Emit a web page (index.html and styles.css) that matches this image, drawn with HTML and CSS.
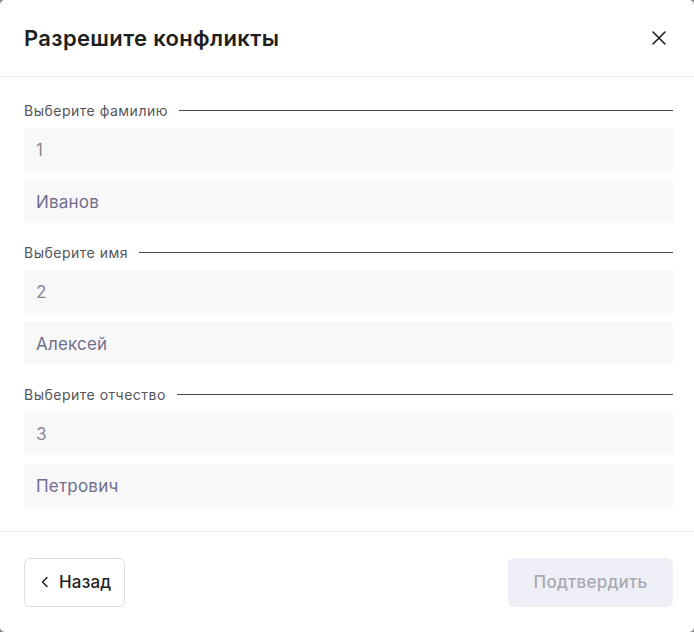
FILE: index.html
```html
<!DOCTYPE html>
<html lang="ru">
<head>
<meta charset="utf-8">
<link rel="stylesheet" href="styles.css">
</head>
<body>
<div class="modal">
  <div class="header">
    <h1 class="title">Разрешите конфликты</h1>
    <button class="close" aria-label="Закрыть">
      <svg width="16" height="16" viewBox="0 0 16 16"><path d="M2 2L14 14M14 2L2 14" stroke="#1f1f1f" stroke-width="1.6" stroke-linecap="round" fill="none"/></svg>
    </button>
  </div>
  <div class="body">
    <div class="group">
      <div class="label"><span>Выберите фамилию</span><i class="rule"></i></div>
      <div class="option num">1</div>
      <div class="option">Иванов</div>
    </div>
    <div class="group">
      <div class="label"><span>Выберите имя</span><i class="rule"></i></div>
      <div class="option num">2</div>
      <div class="option">Алексей</div>
    </div>
    <div class="group">
      <div class="label"><span>Выберите отчество</span><i class="rule"></i></div>
      <div class="option num">3</div>
      <div class="option">Петрович</div>
    </div>
  </div>
  <div class="footer">
    <button class="btn back">
      <svg width="10" height="12" viewBox="0 0 10 12"><path d="M7 1.5L2.5 6L7 10.5" stroke="#1f1f1f" stroke-width="1.5" fill="none" stroke-linecap="round" stroke-linejoin="round"/></svg>
      <span>Назад</span>
    </button>
    <button class="btn confirm" disabled>Подтвердить</button>
  </div>
</div>
</body>
</html>
```

FILE: styles.css
```css
html, body {
  margin: 0;
  padding: 0;
  background: #8a8a8a;
}
body {
  font-family: Inter, "Noto Sans", sans-serif;
}
.modal {
  width: 694px;
  height: 632px;
  background: #ffffff;
  border-radius: 5px;
  display: flex;
  flex-direction: column;
  box-sizing: border-box;
  overflow: hidden;
}
.header {
  height: 77px;
  box-sizing: border-box;
  border-bottom: 1px solid #f0f0f2;
  display: flex;
  align-items: center;
  justify-content: space-between;
  padding: 0 24px 1px 24px;
  flex: none;
}
.title {
  margin: 0;
  font-size: 22px;
  font-weight: 600;
  color: #1f1f1f;
  letter-spacing: 0.35px;
}
.close {
  border: none;
  background: none;
  padding: 0;
  width: 16px;
  height: 16px;
  display: flex;
  margin-right: 3px;
  cursor: pointer;
}
.body {
  padding: 24px 21px 24px 24px;
  display: flex;
  flex-direction: column;
  gap: 20px;
  border-bottom: 1px solid #f0f0f2;
  flex: none;
}
.group {
  display: flex;
  flex-direction: column;
  gap: 9px;
}
.label {
  height: 18px;
  display: flex;
  align-items: center;
  gap: 11px;
  font-size: 14px;
  letter-spacing: 0.5px;
  color: #555559;
}
.rule {
  flex: 1;
  height: 1px;
  background: #444448;
}
.option {
  width: 649px;
  height: 43px;
  box-sizing: border-box;
  background: #f8f8f9;
  padding: 0 12px;
  display: flex;
  align-items: center;
  font-size: 17px;
  letter-spacing: 0.2px;
  color: #6f6f8c;
}
.option.num {
  color: #8a8a8e;
}
.footer {
  flex: 1;
  display: flex;
  align-items: center;
  justify-content: space-between;
  padding: 0 21px 0 24px;
}
.btn {
  height: 49px;
  border-radius: 6px;
  font-family: Inter, "Noto Sans", sans-serif;
  font-size: 17px;
  letter-spacing: 0.2px;
  font-weight: 500;
  display: flex;
  align-items: center;
  box-sizing: border-box;
}
.back {
  width: 101px;
  background: #ffffff;
  border: 1px solid #dedee2;
  color: #1f1f1f;
  padding: 0 0 0 15px;
  gap: 9px;
}
.confirm {
  width: 165px;
  border: none;
  background: #efeff7;
  color: #a9a9b2;
  justify-content: center;
}
```
